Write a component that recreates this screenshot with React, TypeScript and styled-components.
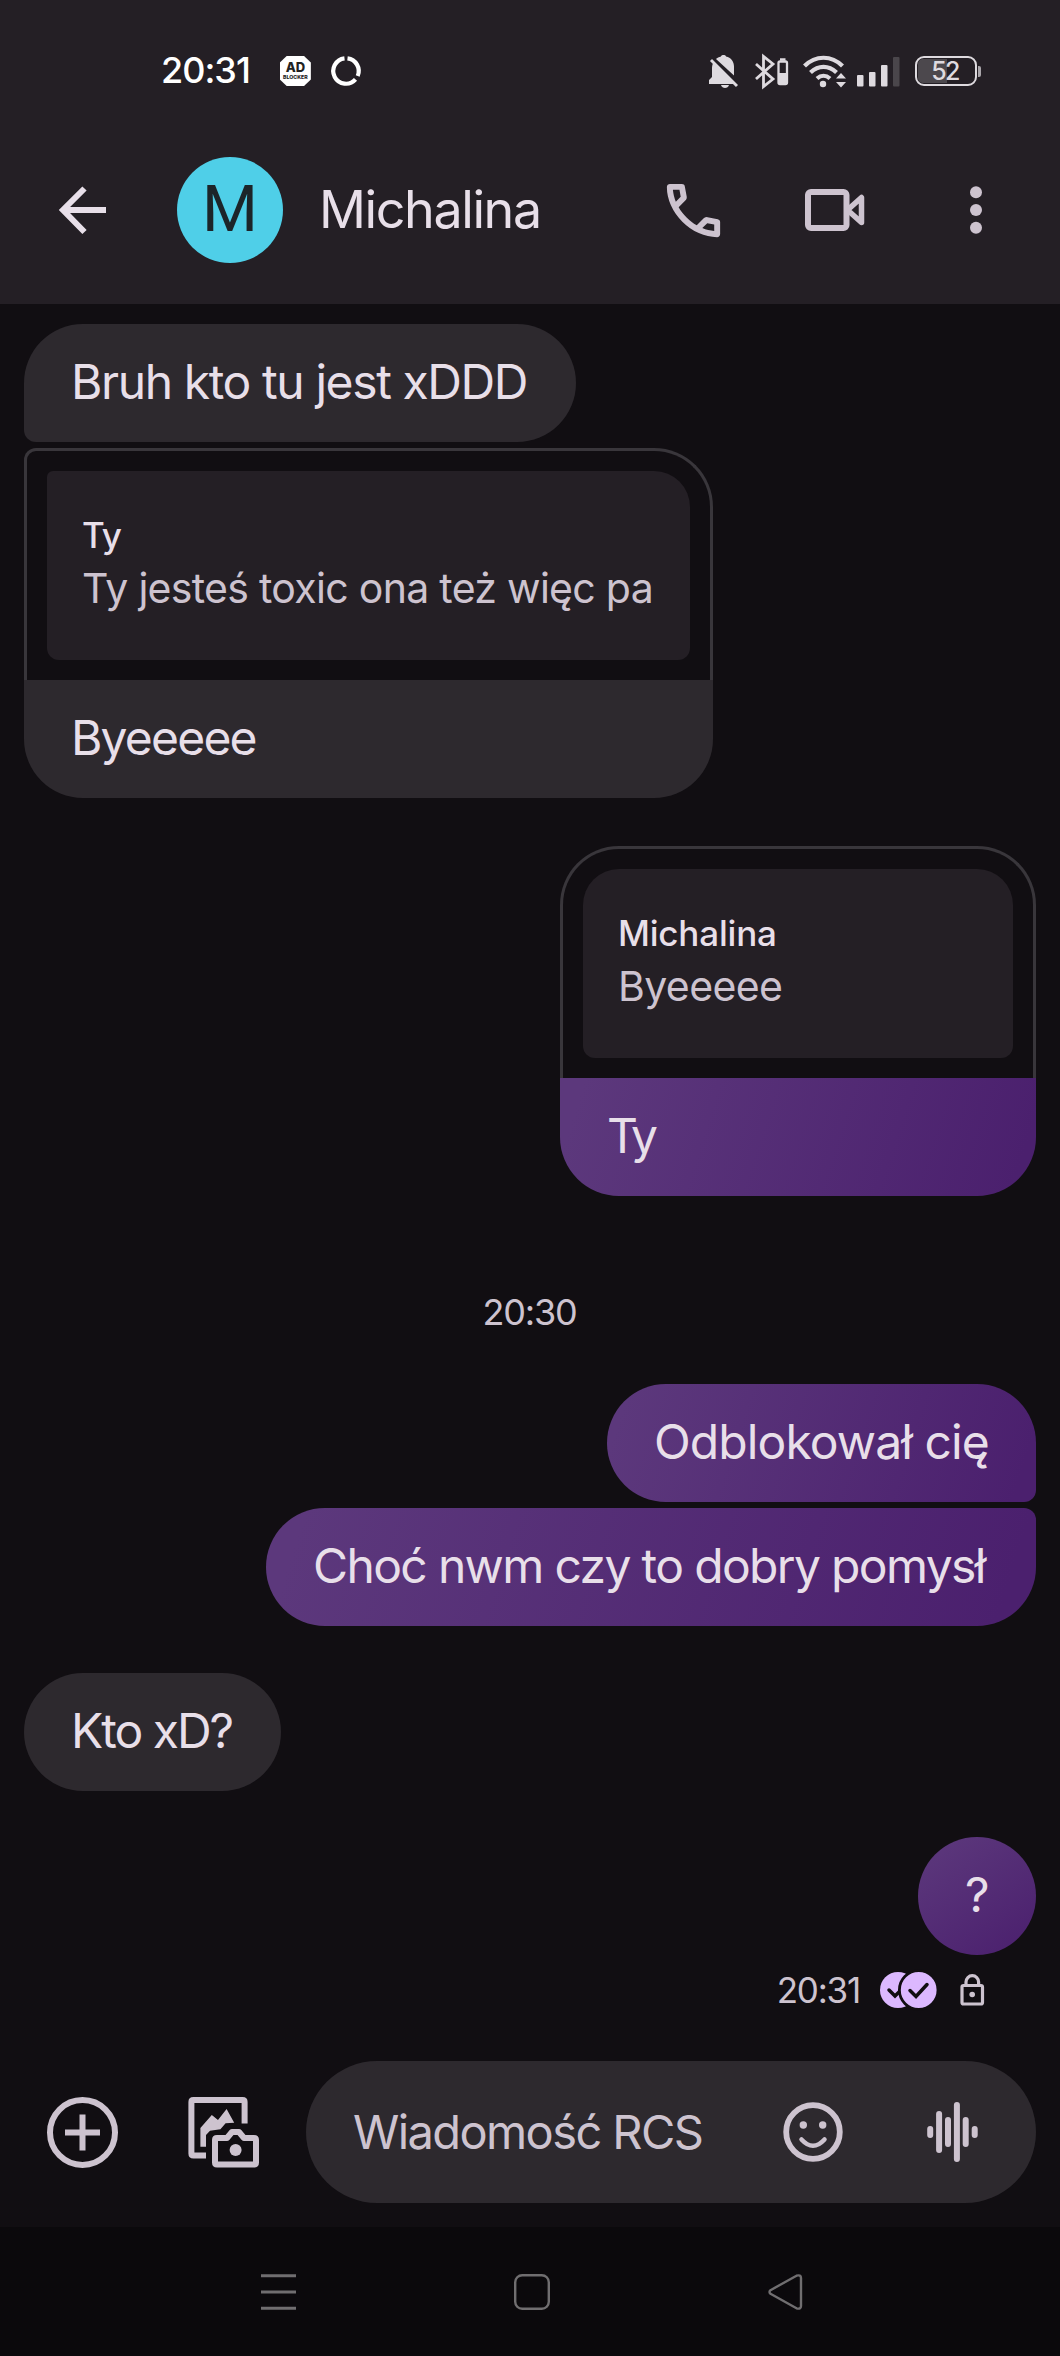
import React from "react";
import styled, { createGlobalStyle, css } from "styled-components";

const c = {
  bar: "#241f25",
  page: "#110e12",
  bubble: "#2d292e",
  outline: "#39363b",
  text: "#e8dfe9",
  muted: "#cdc3cf",
  nav: "#0b090c",
  navIcon: "#706e70",
  status: "#dedadf",
  accent: "#dcb8ff",
};

const Global = createGlobalStyle`
  * { box-sizing: border-box; }
  body { margin: 0; background: ${c.page}; }
`;

const Screen = styled.div`
  width: 1060px;
  height: 2356px;
  display: flex;
  flex-direction: column;
  background: ${c.page};
  color: ${c.text};
  font-family: Inter, "Liberation Sans", sans-serif;
  overflow: hidden;
`;

const Icon = styled.svg<{ $gap?: number }>`
  display: block;
  flex: none;
  overflow: visible;
  margin-left: ${(p) => p.$gap ?? 0}px;
`;

const Label = styled.span<{ $size: number; $track?: number; $weight?: number; $color?: string }>`
  display: block;
  white-space: nowrap;
  line-height: 1.2;
  font-size: ${(p) => p.$size}px;
  letter-spacing: ${(p) => p.$track ?? 0}px;
  font-weight: ${(p) => p.$weight ?? 400};
  color: ${(p) => p.$color ?? c.text};
`;

const Header = styled.header`
  height: 304px;
  flex: none;
  background: ${c.bar};
`;

const StatusBar = styled.div`
  height: 142px;
  padding: 0 79px 0 161px;
  display: flex;
  align-items: center;
  justify-content: space-between;
`;

const StatusGroup = styled.div`
  display: flex;
  align-items: center;
`;

const AdBadge = styled.div`
  width: 31px;
  height: 30px;
  margin-left: 30px;
  display: flex;
  flex-direction: column;
  align-items: center;
  justify-content: center;
  background: #fff;
  color: #222;
  clip-path: polygon(22% 0, 78% 0, 100% 22%, 100% 78%, 78% 100%, 22% 100%, 0 78%, 0 22%);
  font-weight: 800;
  line-height: 1;
`;

const AdTop = styled.span`
  font-size: 13px;
`;

const AdBottom = styled.span`
  font-size: 5.2px;
  margin-top: 1px;
`;

const Battery = styled.div`
  width: 62px;
  height: 30px;
  margin-left: 16px;
  padding: 1px;
  border: 2px solid ${c.status};
  border-radius: 9px;
  display: flex;
`;

const BatteryLevel = styled.div`
  flex: 1;
  border-radius: 5px;
  display: flex;
  align-items: center;
  justify-content: center;
  padding-right: 2px;
  background: linear-gradient(90deg, #4c484d 52%, transparent 52%);
`;

const BatteryNub = styled.div`
  width: 3px;
  height: 11px;
  margin-left: 1px;
  border-radius: 0 2px 2px 0;
  background: #aaa6ab;
`;

const AppBar = styled.div`
  height: 136px;
  padding: 0 78px 0 59px;
  display: flex;
  align-items: center;
`;

const Avatar = styled.div`
  width: 106px;
  height: 106px;
  margin: 0 36px 0 71px;
  border-radius: 50%;
  background: #4fcfe8;
  color: #1c2529;
  font-family: Roboto, sans-serif;
  font-size: 64px;
  line-height: 1;
  display: flex;
  align-items: center;
  justify-content: center;
`;

const Title = styled.div`
  flex: 1;
`;

const Thread = styled.main`
  flex: 1;
  padding: 20px 24px 0;
  display: flex;
  flex-direction: column;
`;

type Side = "in" | "out";

const fill = css<{ $side: Side; $angle?: number }>`
  background: ${(p) =>
    p.$side === "in" ? c.bubble : `linear-gradient(${p.$angle ?? 108}deg, #5c387c 5%, #4b206e 95%)`};
`;

const Bubble = styled.div<{ $side: Side; $w: number; $gap?: number; $radius?: string; $angle?: number }>`
  ${fill}
  width: ${(p) => p.$w}px;
  height: 118px;
  flex: none;
  align-self: ${(p) => (p.$side === "in" ? "flex-start" : "flex-end")};
  margin-top: ${(p) => p.$gap ?? 0}px;
  padding: 0 0 2px 47px;
  border-radius: ${(p) => p.$radius ?? "59px"};
  display: flex;
  align-items: center;
`;

const ReplyCard = styled.div<{ $side: Side; $w: number; $gap: number }>`
  width: ${(p) => p.$w}px;
  flex: none;
  align-self: ${(p) => (p.$side === "in" ? "flex-start" : "flex-end")};
  margin-top: ${(p) => p.$gap}px;
`;

const QuoteFrame = styled.div<{ $side: Side }>`
  height: 232px;
  padding: 20px 20px 0;
  border: 3px solid ${c.outline};
  border-bottom: 0;
  border-radius: ${(p) => (p.$side === "in" ? "12px 59px 0 0" : "59px 59px 0 0")};
`;

const Quote = styled.div<{ $side: Side }>`
  height: 189px;
  padding: 43px 0 0 35px;
  display: flex;
  flex-direction: column;
  gap: 8px;
  background: ${c.bar};
  border-radius: ${(p) => (p.$side === "in" ? "6px 36px 12px 12px" : "36px 36px 12px 12px")};
`;

const TimeDivider = styled.div`
  height: 188px;
  padding: 95px 1px 0 0;
  flex: none;
  display: flex;
  justify-content: center;
`;

const Receipt = styled.div`
  display: flex;
  justify-content: flex-end;
  align-items: center;
  height: 44px;
  margin-top: 13px;
  padding-right: 51px;
`;

const Composer = styled.div`
  height: 166px;
  flex: none;
  padding: 0 24px 24px 47px;
  display: flex;
  align-items: center;
`;

const Field = styled.div`
  flex: 1;
  height: 142px;
  margin-left: 47px;
  padding: 0 58px 0 47px;
  border-radius: 71px;
  background: ${c.bubble};
  display: flex;
  align-items: center;
`;

const Grow = styled.div`
  flex: 1;
`;

const NavBar = styled.nav`
  height: 129px;
  flex: none;
  padding: 0 257px 0 261px;
  display: flex;
  justify-content: space-between;
  align-items: center;
  background: ${c.nav};
`;

function StatusIcons() {
  return (
    <>
      <Icon width="31" height="33" viewBox="709 54 31 33" fill={c.status}>
        <path d="M709 83v-4l3-3v-9c0-3 1-5 2-6l22 22zM716 58c1-1 3-2 5-2.500 0-2 5-2 5 0 5 1 8 5 8 10v9z" />
        <path d="M721 84h8c-1 4-7 4-8 0z" />
        <path d="M711 59l26 26" stroke={c.status} strokeWidth="3" />
        <path d="M713 57.500l26 26" stroke={c.bar} strokeWidth="1.500" />
      </Icon>
      <Icon $gap={15} width="34" height="33" viewBox="755 54 34 33" fill="none" stroke={c.status}>
        <path d="M756 63l17 15-9.500 7.500v-30l9.500 7.500-17 15" strokeWidth="2.800" />
        <rect x="778.500" y="60.500" width="8.500" height="22.500" rx="1.500" strokeWidth="2.300" />
        <path d="M780 58.500h5.500" strokeWidth="2.500" />
        <path d="M779 72h8v11h-8z" fill={c.status} stroke="none" />
      </Icon>
      <Icon $gap={14} width="43" height="34" viewBox="803 53 43 34" fill="none" stroke={c.status} strokeWidth="4.200">
        <path d="M804.500 65c11-11 27-11 38 0M810.500 71.500c8-7.500 18-7.500 26 0M817 77.500c4-3.500 9-3.500 13 0" />
        <circle cx="823" cy="83" r="3.200" fill={c.status} stroke="none" />
        <path d="M836 77.500l5-5.500 5 5.500zM836 81l5 5.500 5-5.500z" fill={c.status} stroke="none" />
      </Icon>
      <Icon $gap={11} width="42" height="33" viewBox="857 54 42 33" fill={c.status}>
        <rect x="857" y="74" width="6.500" height="11.500" rx="1" />
        <rect x="869" y="71" width="6.500" height="14.500" rx="1" />
        <rect x="881" y="64" width="6.500" height="21.500" rx="1" />
        <rect x="893" y="56" width="6.500" height="29.500" rx="1" fill="#4a464b" />
      </Icon>
    </>
  );
}

export default function App() {
  return (
    <Screen>
      <Global />
      <Header>
        <StatusBar>
          <StatusGroup>
            <Label $size={36} $weight={500} $color="#fff" $track={-1}>20:31</Label>
            <AdBadge>
              <AdTop>AD</AdTop>
              <AdBottom>BLOCKER</AdBottom>
            </AdBadge>
            <Icon $gap={20} width="30" height="30" viewBox="-15 -15 30 30" fill="none" stroke="#fff" strokeWidth="4.200">
              <path d="M1.500 -12.600A12.700 12.700 0 0 1 11.700 5M9.500 8.400A12.700 12.700 0 1 1 -1.500 -12.600" />
            </Icon>
          </StatusGroup>
          <StatusGroup>
            <StatusIcons />
            <Battery>
              <BatteryLevel>
                <Label $size={25} $weight={500} $color={c.status} $track={-1.8}>52</Label>
              </BatteryLevel>
            </Battery>
            <BatteryNub />
          </StatusGroup>
        </StatusBar>
        <AppBar>
          <Icon width="47" height="48" viewBox="59 186 47 48" fill="none" stroke={c.text} strokeWidth="6">
            <path d="M84.500 188.500L63 210l21.500 22M62 210h44" />
          </Icon>
          <Avatar>M</Avatar>
          <Title>
            <Label $size={52} $track={-1.4}>Michalina</Label>
          </Title>
          <Icon width="71" height="71" viewBox="0 -960 960 960" fill={c.muted}>
            <path d="M798-120q-125 0-247-54.500T329-329Q229-429 174.500-551T120-798q0-18 12-30t30-12h162q14 0 25 9.500t13 22.500l26 140q2 16-1 27t-11 19l-97 98q20 37 47.500 71.500T387-386q31 31 65 57.500t72 48.500l94-94q9-9 23.500-13.500T670-390l138 28q14 4 23 14.500t9 23.500v162q0 18-12 30t-30 12ZM241-600l66-66-17-94h-89q5 41 14 81t26 79Zm358 358q39 17 79.500 27t81.500 13v-88l-94-19-67 67Z" />
          </Icon>
          <Icon $gap={76} width="60" height="42" viewBox="806.500 189 60 42" fill="none" stroke={c.muted} strokeWidth="6" strokeLinejoin="round">
            <rect x="809.500" y="192" width="38.500" height="36" rx="3" />
            <path d="M849 210l14-12.500v25z" strokeWidth="5.500" />
          </Icon>
          <Icon $gap={105} width="12" height="48" viewBox="971.500 186 12 48" fill={c.muted}>
            <circle cx="977.500" cy="192.300" r="6" />
            <circle cx="977.500" cy="210" r="6" />
            <circle cx="977.500" cy="227.800" r="6" />
          </Icon>
        </AppBar>
      </Header>

      <Thread>
        <Bubble $side="in" $w={552} $radius="59px 59px 59px 12px">
          <Label $size={48} $track={-1.4}>Bruh kto tu jest xDDD</Label>
        </Bubble>
        <ReplyCard $side="in" $w={689} $gap={6}>
          <QuoteFrame $side="in">
            <Quote $side="in">
              <Label $size={35} $weight={500} $track={-1}>Ty</Label>
              <Label $size={41} $color={c.muted} $track={-0.7}>Ty jesteś toxic ona też więc pa</Label>
            </Quote>
          </QuoteFrame>
          <Bubble $side="in" $w={689} $radius="0 0 59px 59px">
            <Label $size={48} $track={-1.8}>Byeeeee</Label>
          </Bubble>
        </ReplyCard>
        <ReplyCard $side="out" $w={476} $gap={48}>
          <QuoteFrame $side="out">
            <Quote $side="out">
              <Label $size={35} $weight={500} $track={-0.2}>Michalina</Label>
              <Label $size={41} $color={c.muted} $track={-0.6}>Byeeeee</Label>
            </Quote>
          </QuoteFrame>
          <Bubble $side="out" $w={476} $radius="0 0 59px 59px">
            <Label $size={48} $track={-4}>Ty</Label>
          </Bubble>
        </ReplyCard>
        <TimeDivider>
          <Label $size={36} $color={c.muted} $track={-1.2}>20:30</Label>
        </TimeDivider>
        <Bubble $side="out" $w={429} $radius="59px 59px 12px 59px">
          <Label $size={48} $track={-0.9}>Odblokował cię</Label>
        </Bubble>
        <Bubble $side="out" $w={770} $gap={6} $radius="59px 12px 59px 59px">
          <Label $size={48} $track={-1.65}>Choć nwm czy to dobry pomysł</Label>
        </Bubble>
        <Bubble $side="in" $w={257} $gap={47}>
          <Label $size={48} $track={-2}>Kto xD?</Label>
        </Bubble>
        <Bubble $side="out" $w={118} $gap={46} $angle={145}>
          <Label $size={48}>?</Label>
        </Bubble>
        <Receipt>
          <Label $size={35} $color={c.muted} $track={-1.2}>20:31</Label>
          <Icon $gap={20} width="57" height="36" viewBox="880 1973 57 36" fill={c.accent}>
            <circle cx="898" cy="1991" r="18" />
            <path d="M889 1991l6 6 12-12" fill="none" stroke={c.page} strokeWidth="3.500" strokeLinecap="round" />
            <circle cx="918.700" cy="1991" r="19.300" stroke={c.page} strokeWidth="2.800" />
            <path d="M910 1991.500l6 6 11-12" fill="none" stroke={c.page} strokeWidth="3.500" strokeLinecap="round" />
          </Icon>
          <Icon $gap={23} width="25" height="32" viewBox="959.500 1974.500 25 32" fill="none" stroke={c.muted} strokeWidth="3.200">
            <rect x="961.500" y="1986" width="20.500" height="18.500" rx="1.500" />
            <path d="M965.500 1986v-3.500a6.300 6.300 0 0 1 12.600 0v3.500" />
            <circle cx="971.700" cy="1995" r="2.800" fill={c.muted} stroke="none" />
          </Icon>
        </Receipt>
      </Thread>

      <Composer>
        <Icon width="71" height="71" viewBox="0 0 71 71" fill="none" stroke={c.muted} strokeWidth="6">
          <circle cx="35.500" cy="35.500" r="32.500" />
          <path d="M35.500 17.500v36M18 35.500h35" />
        </Icon>
        <Icon $gap={70} width="71" height="71" viewBox="188 2097 71 71" fill="none" stroke={c.muted} strokeWidth="6" strokeLinejoin="round">
          <path d="M244.600 2123.500V2102q0-2-2-2h-49.200q-2 0-2 2v51.500q0 2 2 2H206" />
          <path d="M200.400 2128l11.400-13 6.200 5 8.600-11 7.600 13.700-8.600.6-5.200 6-10.400 1.400-4 4.300v11.700h-5.600z" fill={c.muted} stroke="none" />
          <path d="M217 2138h10l5-6h7l5 6h10q2 0 2 2v22.500q0 2-2 2h-37q-2 0-2-2V2140q0-2 2-2z" />
          <circle cx="235.600" cy="2150" r="6" fill={c.muted} stroke="none" />
        </Icon>
        <Field>
          <Label $size={47} $color={c.muted} $track={-1.6}>Wiadomość RCS</Label>
          <Grow />
          <Icon width="60" height="60" viewBox="-30 -30 60 60" fill="none" stroke={c.muted} strokeWidth="5.800">
            <circle r="26.800" />
            <path d="M-11.500 7.500Q0 20 11.500 7.500" strokeWidth="4.500" strokeLinecap="round" />
            <circle cx="-9.700" cy="-7" r="3.700" fill={c.muted} stroke="none" />
            <circle cx="9.700" cy="-7" r="3.700" fill={c.muted} stroke="none" />
          </Icon>
          <Icon $gap={84} width="51" height="60" viewBox="-25.500 -30 51 60" fill="none" stroke={c.muted} strokeWidth="6" strokeLinecap="round">
            <path d="M-22.300 -3v6M-13.400 -18v36M-4.500 -12v24M4.400 -27v54M13.200 -12v24M22.200 -3v6" />
          </Icon>
        </Field>
      </Composer>

      <NavBar>
        <Icon width="35" height="36" viewBox="0 0 35 36" stroke={c.navIcon} strokeWidth="3">
          <path d="M0 1.800h35M0 18h35M0 34.200h35" />
        </Icon>
        <Icon width="36" height="36" viewBox="0 0 36 36" fill="none" stroke={c.navIcon} strokeWidth="2.400">
          <rect x="1.200" y="1.200" width="33.600" height="33.600" rx="7" />
        </Icon>
        <Icon width="35" height="36" viewBox="0 0 35 36" fill="none" stroke={c.navIcon} strokeWidth="2.400" strokeLinejoin="round">
          <path d="M2.500 16.200L28.500 1.700Q33 .5 33 4v28q0 3.500-4.500 2.300L2.500 19.800q-2-1.800 0-3.600z" />
        </Icon>
      </NavBar>
    </Screen>
  );
}
